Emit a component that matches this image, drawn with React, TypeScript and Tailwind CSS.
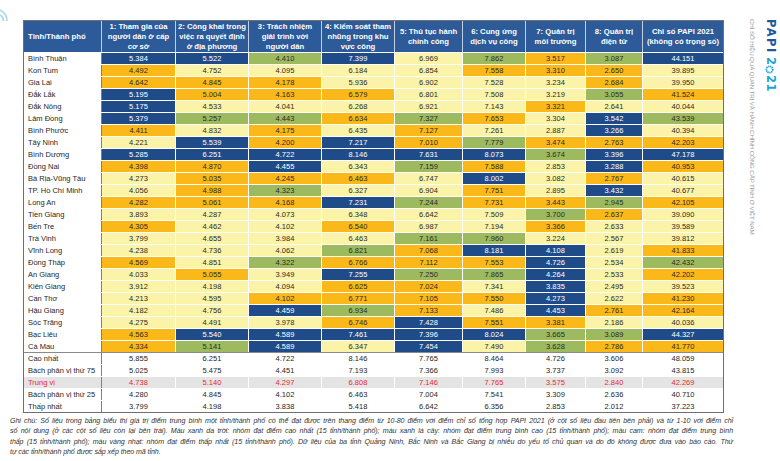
import React from "react";

type Tone = "B" | "G" | "O" | "Y";

const toneClass: Record<Tone, string> = {
  B: "bg-[#1f4c88] text-white",
  G: "bg-[#9dbb5e] text-[#2a2a2a]",
  O: "bg-[#fbb919] text-[#2a2a2a]",
  Y: "bg-[#fbf4a8] text-[#2a2a2a]",
};

const cols = "grid grid-cols-[78px_74px_73px_73px_73px_68px_63px_60px_57px_80px]";

const headers = [
  ["1: Tham gia của", "người dân ở cấp", "cơ sở"],
  ["2: Công khai trong", "việc ra quyết định", "ở địa phương"],
  ["3: Trách nhiệm", "giải trình với", "người dân"],
  ["4: Kiểm soát tham", "nhũng trong khu", "vực công"],
  ["5: Thủ tục hành", "chính công"],
  ["6: Cung ứng", "dịch vụ công"],
  ["7: Quản trị", "môi trường"],
  ["8: Quản trị", "điện tử"],
  ["Chỉ số PAPI 2021", "(không có trọng số)"],
];

const provinces: [string, string][] = [
  ["Bình Thuận", "5.384B 5.522B 4.410G 7.399B 6.969Y 7.862G 3.517O 3.087G 44.151B"],
  ["Kon Tum", "4.492O 4.752Y 4.095Y 6.184Y 6.854Y 7.558O 3.310O 2.650O 39.895Y"],
  ["Gia Lai", "4.642O 4.845O 4.178O 5.936Y 6.902Y 7.528Y 3.234Y 2.684O 39.950Y"],
  ["Đắk Lắk", "5.195B 5.004O 4.163O 6.579O 6.801Y 7.508Y 3.219Y 3.055G 41.524O"],
  ["Đắk Nông", "5.175B 4.533Y 4.041Y 6.268Y 6.921Y 7.143Y 3.321O 2.641Y 40.044Y"],
  ["Lâm Đồng", "5.379B 5.257G 4.443G 6.634O 7.327G 7.653O 3.304Y 3.542B 43.539G"],
  ["Bình Phước", "4.411O 4.832Y 4.175O 6.435Y 7.127O 7.261Y 2.887Y 3.266B 40.394Y"],
  ["Tây Ninh", "4.221Y 5.539B 4.200O 7.217B 7.010O 7.779G 3.474O 2.763O 42.203O"],
  ["Bình Dương", "5.285B 6.251B 4.722B 8.146B 7.631B 8.073B 3.674G 3.396B 47.178B"],
  ["Đồng Nai", "4.398O 4.870O 4.455B 6.343Y 7.159G 7.588O 2.853Y 3.288B 40.953O"],
  ["Bà Rịa-Vũng Tàu", "4.273Y 5.035O 4.245O 6.463O 6.747Y 8.002B 3.082Y 2.767O 40.615Y"],
  ["TP. Hồ Chí Minh", "4.056Y 4.988O 4.323G 6.327Y 6.904Y 7.751O 2.895Y 3.432B 40.677Y"],
  ["Long An", "4.282O 5.061O 4.168O 7.231B 7.244G 7.731O 3.443O 2.945G 42.105O"],
  ["Tiền Giang", "3.893Y 4.287Y 4.073Y 6.348Y 6.642Y 7.509Y 3.700G 2.637O 39.090Y"],
  ["Bến Tre", "4.305O 4.462Y 4.102Y 6.540O 6.987Y 7.194Y 3.366O 2.633Y 39.589Y"],
  ["Trà Vinh", "3.799Y 4.655Y 3.984Y 6.463Y 7.161G 7.960G 3.224Y 2.567Y 39.812Y"],
  ["Vĩnh Long", "4.238Y 4.736Y 4.062Y 6.821G 7.068O 8.181B 4.108B 2.619Y 41.833O"],
  ["Đồng Tháp", "4.569O 4.851Y 4.322G 6.766O 7.112O 7.553O 4.726B 2.534Y 42.432G"],
  ["An Giang", "4.033Y 5.055O 3.949Y 7.255B 7.250G 7.865G 4.264B 2.533Y 42.202O"],
  ["Kiên Giang", "3.912Y 4.198Y 4.094Y 6.625O 7.024O 7.341Y 3.835B 2.495Y 39.523Y"],
  ["Cần Thơ", "4.213Y 4.595Y 4.102O 6.771O 7.105O 7.550O 4.273B 2.622Y 41.230O"],
  ["Hậu Giang", "4.182Y 4.756Y 4.459B 6.934G 7.133O 7.486Y 4.453B 2.761O 42.164O"],
  ["Sóc Trăng", "4.275Y 4.491Y 3.978Y 6.746O 7.428B 7.551O 3.381O 2.186Y 40.036Y"],
  ["Bạc Liêu", "4.563O 5.540B 4.589B 7.461B 7.396B 8.024B 3.665G 3.089G 44.327B"],
  ["Cà Mau", "4.334O 5.141G 4.589B 6.347Y 7.454B 7.490Y 3.628G 2.786O 41.770O"],
];

const stats: [string, string][] = [
  ["Cao nhất", "5.855 6.251 4.722 8.146 7.765 8.464 4.726 3.606 48.059"],
  ["Bách phân vị thứ 75", "5.025 5.475 4.451 7.193 7.366 7.993 3.737 3.092 43.815"],
  ["Trung vị", "4.738 5.140 4.297 6.808 7.146 7.765 3.575 2.840 42.269"],
  ["Bách phân vị thứ 25", "4.280 4.845 4.102 6.463 7.004 7.541 3.309 2.636 40.710"],
  ["Thấp nhất", "3.799 4.198 3.838 5.418 6.642 6.356 2.853 2.012 37.223"],
];

const notes = [
  "Ghi chú: Số liệu trong bảng biểu thị giá trị điểm trung bình một tỉnh/thành phố có thể đạt được trên thang điểm từ 10-80 điểm với điểm chỉ số tổng hợp PAPI 2021 (ở cột số liệu đầu tiên bên phải) và từ 1-10 với điểm chỉ",
  "số nội dung (ở các cột số liệu còn lại bên trái). Màu xanh da trời: nhóm đạt điểm cao nhất (15 tỉnh/thành phố); màu xanh lá cây: nhóm đạt điểm trung bình cao (15 tỉnh/thành phố); màu cam: nhóm đạt điểm trung bình",
  "thấp (15 tỉnh/thành phố); màu vàng nhạt: nhóm đạt điểm thấp nhất (15 tỉnh/thành phố). Dữ liệu của ba tỉnh Quảng Ninh, Bắc Ninh và Bắc Giang bị nhiễu do yếu tố chủ quan và do đó không được đưa vào báo cáo. Thứ",
  "tự các tỉnh/thành phố được sắp xếp theo mã tỉnh.",
];

// vertical brand mark on the right edge (text runs top to bottom)
const PapiLogo: React.FC = () => (
  <div className="flex gap-[9px] pl-[4px] pt-[19px]">
    <div className="[writing-mode:vertical-rl] text-[6.2px] leading-none text-[#9b9b9b] tracking-[-0.12px] whitespace-nowrap">
      CHỈ SỐ HIỆU QUẢ QUẢN TRỊ VÀ HÀNH CHÍNH CÔNG CẤP TỈNH Ở VIỆT NAM
    </div>
    <div
      className="flex flex-col items-center text-[11.5px] font-bold leading-none"
      style={{ fontFamily: '"DejaVu Sans", sans-serif' }}
    >
      <span className="[writing-mode:vertical-rl] text-[#1d5a9c] tracking-[1.4px]">PAPI</span>
      <span className="[writing-mode:vertical-rl] text-[#1ba3d8] mt-[3px]">2</span>
      <svg width="9" height="9" viewBox="0 0 9 9" className="my-[0.5px]">
        <circle cx="4.5" cy="4.5" r="3.2" fill="none" stroke="#1ba3d8" strokeWidth="1.8" strokeDasharray="1.3 0.6" />
      </svg>
      <span className="[writing-mode:vertical-rl] text-[#1ba3d8] tracking-[0.6px]">21</span>
    </div>
  </div>
);

const App: React.FC = () => {
  return (
    <div
      className="relative w-[780px] h-[461px] bg-white flex overflow-hidden"
      style={{ fontFamily: '"Liberation Sans", Arial, sans-serif' }}
    >
      {/* corner wave decoration */}
      <svg className="absolute left-0 top-0" width="14" height="28" viewBox="0 0 14 28">
        <path d="M0 10 A12 12 0 0 1 7 21" fill="none" stroke="#a9d9ef" strokeWidth="1.6" />
        <path d="M0 15 A7 7 0 0 1 3.5 21" fill="none" stroke="#a9d9ef" strokeWidth="1.6" />
      </svg>

      <div className="w-[745px] shrink-0 flex flex-col">
        <div className="ml-[23px] mt-[20px] w-[701px] border border-[#6f6f6f] text-[7.5px] leading-none">
          {/* header */}
          <div className={`${cols} h-[31px] bg-[#2d5a98] text-white font-bold`}>
            <div className="flex items-center px-[4px] border-r border-white/70 text-[7.7px]">
              Tỉnh/Thành phố
            </div>
            {headers.map((lines, i) => (
              <div
                key={i}
                className={`flex flex-col items-center justify-center text-center leading-[10px] text-[7.7px] ${
                  i < headers.length - 1 ? "border-r border-white/70" : ""
                }`}
              >
                {lines.map((l) => (
                  <span key={l} className="whitespace-nowrap">
                    {l}
                  </span>
                ))}
              </div>
            ))}
          </div>

          {/* provinces */}
          {provinces.map(([name, raw]) => {
            const cells = raw.split(" ").map((t) => ({ v: t.slice(0, -1), c: t.slice(-1) as Tone }));
            return (
              <div key={name} className={`${cols} h-[12px] border-t border-white`}>
                <div className="flex items-center px-[4px] border-r border-[#808080] text-[#262626] whitespace-nowrap">
                  {name}
                </div>
                {cells.map((cell, i) => (
                  <div
                    key={i}
                    className={`flex items-center justify-center ${toneClass[cell.c]} ${
                      i < cells.length - 1 ? "border-r border-white" : ""
                    }`}
                  >
                    {cell.v}
                  </div>
                ))}
              </div>
            );
          })}

          {/* summary rows */}
          {stats.map(([name, raw], r) => {
            const median = name === "Trung vị";
            const vals = raw.split(" ");
            return (
              <div
                key={name}
                className={`${cols} h-[12px] border-t ${r === 0 ? "border-[#8a8a8a]" : "border-white"} ${
                  median ? "bg-[#e4e4e4] text-[#ea2a2f]" : "text-[#262626]"
                }`}
              >
                <div className="flex items-center px-[4px] border-r border-[#808080] whitespace-nowrap">{name}</div>
                {vals.map((v, i) => (
                  <div
                    key={i}
                    className={`flex items-center justify-center ${i < vals.length - 1 ? "border-r border-white" : ""}`}
                  >
                    {v}
                  </div>
                ))}
              </div>
            );
          })}
        </div>

        {/* footnote, justified like the printed page */}
        <div className="ml-[10px] mt-[3px] w-[723px] italic text-[7.1px] leading-[10.4px] text-[#333] tracking-[-0.08px]">
          {notes.map((n, i) => (
            <div key={n} className={i < notes.length - 1 ? "text-justify [text-align-last:justify]" : ""}>
              {n}
            </div>
          ))}
        </div>
      </div>

      <PapiLogo />
    </div>
  );
};

export default App;
